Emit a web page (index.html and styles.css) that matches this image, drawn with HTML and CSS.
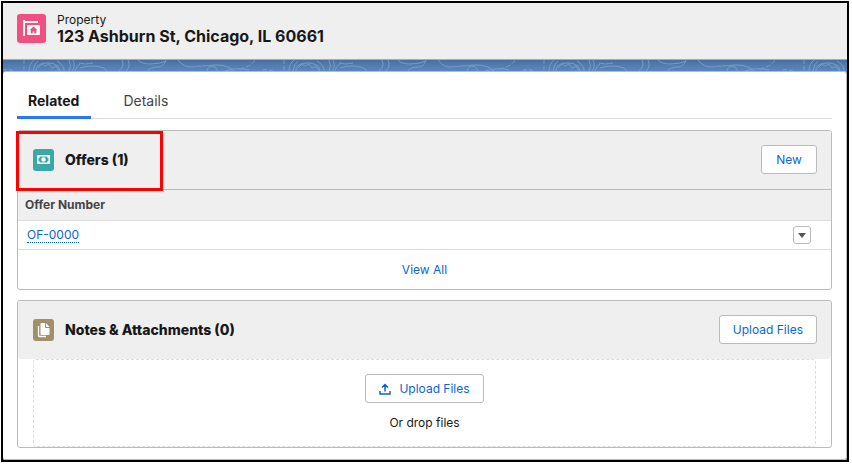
FILE: index.html
```html
<!DOCTYPE html>
<html lang="en">
<head>
    <meta charset="UTF-8">
    <meta name="viewport" content="width=device-width, initial-scale=1.0">
    <title>123 Ashburn St, Chicago, IL 60661</title>
    <link rel="stylesheet" href="styles.css">
</head>
<body>
    <div class="frame">
        <!-- Record Header -->
        <header class="record-header">
            <svg class="record-icon" viewBox="0 0 29 29" aria-hidden="true">
                <rect width="29" height="29" rx="3" fill="#f0507f"/>
                <path d="M6 6h2v1h13v2H8v13H6z" fill="#fff"/>
                <path d="M11 11h11a1 1 0 0 1 1 1v8a1 1 0 0 1-1 1H11a1 1 0 0 1-1-1v-8a1 1 0 0 1 1-1z" fill="#fff"/>
                <path d="M16.500 12.500l4 3.800h-1.200v3.200h-2v-2h-1.600v2h-2v-3.200h-1.200z" fill="#f0507f"/>
            </svg>
            <div>
                <p class="record-type">Property</p>
                <h1>123 Ashburn St, Chicago, IL 60661</h1>
            </div>
        </header>

        <div class="page-background">
            <svg class="topography" aria-hidden="true">
                <defs>
                    <linearGradient id="shade" x1="0" y1="0" x2="0" y2="1">
                        <stop offset="0" stop-color="#476f9f"/>
                        <stop offset="0.500" stop-color="#537db1"/>
                        <stop offset="1" stop-color="#5a86bb"/>
                    </linearGradient>
                    <pattern id="contours" width="260" height="11" patternUnits="userSpaceOnUse">
                        <g fill="none" stroke="#86a8d0" stroke-width="1" opacity="0.700">
                            <path d="M0 10q6-1 10 1M21 0v11" stroke-dasharray="4 2"/>
                            <path d="M26 11q0-7 5-11M30 11q1-7 5-10M54 1q7 4 7 10"/>
                            <path d="M33 11q-1-8 12-8 11 0 12 8M35 8l4-4 3 2 4-2 3 4 4-2 3 5"/>
                            <path d="M66 0q3 6 0 11M70 0q3 6-1 11"/>
                            <path d="M72 11q1-5 5-7M77 8q12-4 24 0l3 3M76 3q6 2 14 0" />
                            <path d="M119 0q3 6-3 11M125 0q3 6-2 11M135 0q3 4 12 4 10 0 16-3"/>
                            <path d="M145 11q2-4 10-4 6 0 8-7"/>
                            <path d="M175 0q6 8 14 7t24-2q12 0 18 6M204 11q1-5 5-5t6 5"/>
                            <path d="M222 11q14-4 24-1" />
                            <path d="M236 9q12-2 16-9" stroke-dasharray="5 2"/>
                        </g>
                    </pattern>
                </defs>
                <rect width="100%" height="11" fill="url(#shade)"/>
                <rect width="100%" height="11" fill="url(#contours)"/>
            </svg>

            <main class="record-body">
                <nav class="tabs">
                    <a href="#related" class="tab active">Related</a>
                    <a href="#details" class="tab">Details</a>
                </nav>

                <!-- Offers -->
                <section class="card">
                    <div class="card-header offers-header">
                        <svg class="card-icon" viewBox="0 0 21 22" aria-hidden="true">
                            <rect width="21" height="22" rx="3" fill="#3ba8a8"/>
                            <rect x="4" y="6" width="13" height="9" rx="1" fill="#fff"/>
                            <path d="M7 7.500h7q0 1.500 1.500 1.500v3q-1.500 0-1.500 1.500H7q0-1.500-1.500-1.500V9Q7 9 7 7.500z" fill="#3ba8a8"/>
                            <circle cx="10.500" cy="10.500" r="2.200" fill="#fff"/>
                        </svg>
                        <h2>Offers (1)</h2>
                        <button type="button" class="button">New</button>
                        <span class="highlight"></span>
                    </div>
                    <table>
                        <thead>
                            <tr><th scope="col" colspan="2">Offer Number</th></tr>
                        </thead>
                        <tbody>
                            <tr>
                                <td><a href="#of-0000" class="record-link">OF-0000</a></td>
                                <td class="row-action">
                                    <button type="button" class="menu-button" aria-label="Show actions">
                                        <svg width="8" height="5" viewBox="0 0 8 5"><path d="M0 0h8L4 5z" fill="#555"/></svg>
                                    </button>
                                </td>
                            </tr>
                        </tbody>
                    </table>
                    <div class="card-footer"><a href="#offers">View All</a></div>
                </section>

                <!-- Notes & Attachments -->
                <section class="card">
                    <div class="card-header">
                        <svg class="card-icon" viewBox="0 0 21 22" aria-hidden="true">
                            <rect width="21" height="22" rx="3" fill="#a08f68"/>
                            <path d="M5.500 7v9.500q0 1 1 1H13" fill="none" stroke="#fff" stroke-width="1.300"/>
                            <path d="M8.500 4H12v4q0 1 1 1h3.500v6q0 1-1 1h-7q-1 0-1-1V5q0-1 1-1z" fill="#fff"/>
                            <path d="M13 4l3.500 4H13z" fill="#fff"/>
                        </svg>
                        <h2>Notes &amp; Attachments (0)</h2>
                        <button type="button" class="button">Upload Files</button>
                    </div>
                    <div class="drop-zone">
                        <button type="button" class="button">
                            <svg width="12" height="12" viewBox="0 0 12 12" aria-hidden="true">
                                <path d="M1 8v3h10V8M6 8.500V2M3 4.500l3-3 3 3" fill="none" stroke="#0b66d0" stroke-width="1.500"/>
                            </svg>
                            Upload Files
                        </button>
                        <p>Or drop files</p>
                    </div>
                </section>
            </main>
        </div>
    </div>
</body>
</html>
```
FILE: styles.css
```css
/* General Styling */
* {
    box-sizing: border-box;
}

body {
    margin: 1px 3px 0 1px;
    font-family: Inter, "Liberation Sans", sans-serif;
    font-size: 12px;
    line-height: 16px;
    color: #181818;
    background: white;
}

h1, h2, p {
    margin: 0;
}

a {
    color: #0b66d0;
    text-decoration: none;
}

.frame {
    border: 2px solid black;
}

/* Record Header */
.record-header {
    display: flex;
    align-items: flex-start;
    gap: 11px;
    padding: 11px 14px 13px;
    background: #efefef;
    border-bottom: 1px solid #aaa;
}

.record-icon {
    width: 29px;
    height: 29px;
}

.record-type {
    line-height: 12px;
}

h1 {
    font-size: 16px;
    line-height: 20px;
}

.page-background {
    background: #5a86bb;
}

.topography {
    display: block;
    width: 100%;
    height: 11px;
}

.record-body {
    padding: 13px 14px 11px;
    background: white;
    border: 1px solid #bbb;
    border-left: none;
    border-radius: 3px;
}

/* Tabs */
.tabs {
    display: flex;
    margin-bottom: 11px;
    border-bottom: 1px solid #ddd;
}

.tab {
    padding: 5px 12px 4px 11px;
    margin-right: 21px;
    margin-bottom: -1px;
    border-bottom: 3px solid transparent;
    font-size: 14px;
    line-height: 22px;
    color: #444;
}

.tab.active {
    border-color: #2a76fb;
    font-weight: bold;
    color: #181818;
}

/* Cards */
.card {
    margin-bottom: 10px;
    border: 1px solid #bbb;
    border-radius: 3px;
}

.card:last-child {
    margin-bottom: 0;
}

.card-header {
    display: flex;
    align-items: center;
    gap: 11px;
    padding: 14px 14px 15px;
    background: #efefef;
    border-radius: 3px;
}

.offers-header {
    position: relative;
    border-bottom: 1px solid #bbb;
    border-radius: 3px 3px 0 0;
}

.card-icon {
    width: 21px;
    height: 22px;
    margin-left: 1px;
}

h2 {
    flex: 1;
    font-size: 14px;
    font-weight: 800;
    line-height: 20px;
}

.button {
    min-width: 56px;
    height: 29px;
    padding: 0 13px;
    background: white;
    border: 1px solid #bbb;
    border-radius: 3px;
    font-family: inherit;
    font-size: 12px;
    color: #0b66d0;
}

/* Callout around the Offers title */
.highlight {
    position: absolute;
    top: 0;
    left: -2px;
    width: 147px;
    height: 60px;
    border: 3px solid #f00;
}

/* Offers Table */
table {
    width: 100%;
    border-collapse: collapse;
}

th {
    padding: 7px;
    background: #efefef;
    border-bottom: 1px solid #ddd;
    text-align: left;
    color: #444;
}

td {
    padding: 5px 9px;
    border-bottom: 1px solid #ddd;
}

.record-link {
    border-bottom: 1px dotted #0b66d0;
}

.row-action {
    padding-right: 20px;
    text-align: right;
}

.menu-button {
    display: inline-flex;
    align-items: center;
    justify-content: center;
    width: 18px;
    height: 18px;
    padding: 0;
    background: white;
    border: 1px solid #bbb;
    border-radius: 3px;
    vertical-align: middle;
}

.card-footer {
    padding: 12px 12px 11px;
    text-align: center;
}

/* File Upload */
.drop-zone {
    margin: 0 15px;
    padding: 14px 14px 15px;
    border: 1px dashed #ddd;
    border-radius: 3px;
    text-align: center;
}

.drop-zone .button {
    display: inline-flex;
    align-items: center;
    gap: 8px;
}

.drop-zone p {
    margin-top: 12px;
}
```
